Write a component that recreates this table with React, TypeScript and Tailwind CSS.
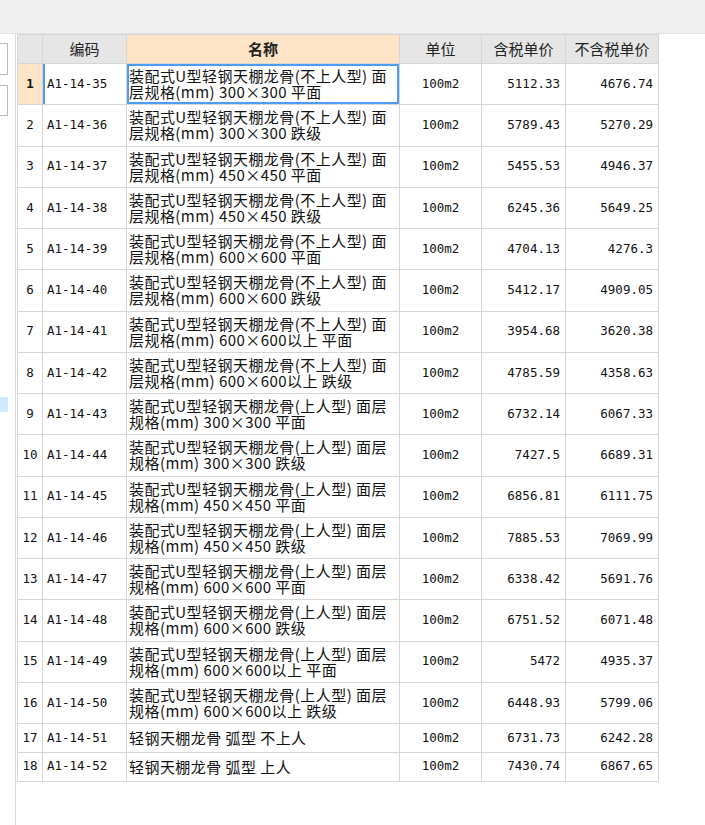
type Row = {
  code: string;
  name: [string, string?];
  unit: string;
  tax: string;
  noTax: string;
};

const spec = (upper: boolean, size: string, kind: string): [string, string] =>
  upper
    ? ["装配式U型轻钢天棚龙骨(上人型) 面层", `规格(mm) ${size} ${kind}`]
    : ["装配式U型轻钢天棚龙骨(不上人型) 面", `层规格(mm) ${size} ${kind}`];

const rows: Row[] = [
  { code: "A1-14-35", name: spec(false, "300×300", "平面"), unit: "100m2", tax: "5112.33", noTax: "4676.74" },
  { code: "A1-14-36", name: spec(false, "300×300", "跌级"), unit: "100m2", tax: "5789.43", noTax: "5270.29" },
  { code: "A1-14-37", name: spec(false, "450×450", "平面"), unit: "100m2", tax: "5455.53", noTax: "4946.37" },
  { code: "A1-14-38", name: spec(false, "450×450", "跌级"), unit: "100m2", tax: "6245.36", noTax: "5649.25" },
  { code: "A1-14-39", name: spec(false, "600×600", "平面"), unit: "100m2", tax: "4704.13", noTax: "4276.3" },
  { code: "A1-14-40", name: spec(false, "600×600", "跌级"), unit: "100m2", tax: "5412.17", noTax: "4909.05" },
  { code: "A1-14-41", name: spec(false, "600×600以上", "平面"), unit: "100m2", tax: "3954.68", noTax: "3620.38" },
  { code: "A1-14-42", name: spec(false, "600×600以上", "跌级"), unit: "100m2", tax: "4785.59", noTax: "4358.63" },
  { code: "A1-14-43", name: spec(true, "300×300", "平面"), unit: "100m2", tax: "6732.14", noTax: "6067.33" },
  { code: "A1-14-44", name: spec(true, "300×300", "跌级"), unit: "100m2", tax: "7427.5", noTax: "6689.31" },
  { code: "A1-14-45", name: spec(true, "450×450", "平面"), unit: "100m2", tax: "6856.81", noTax: "6111.75" },
  { code: "A1-14-46", name: spec(true, "450×450", "跌级"), unit: "100m2", tax: "7885.53", noTax: "7069.99" },
  { code: "A1-14-47", name: spec(true, "600×600", "平面"), unit: "100m2", tax: "6338.42", noTax: "5691.76" },
  { code: "A1-14-48", name: spec(true, "600×600", "跌级"), unit: "100m2", tax: "6751.52", noTax: "6071.48" },
  { code: "A1-14-49", name: spec(true, "600×600以上", "平面"), unit: "100m2", tax: "5472", noTax: "4935.37" },
  { code: "A1-14-50", name: spec(true, "600×600以上", "跌级"), unit: "100m2", tax: "6448.93", noTax: "5799.06" },
  { code: "A1-14-51", name: ["轻钢天棚龙骨 弧型 不上人"], unit: "100m2", tax: "6731.73", noTax: "6242.28" },
  { code: "A1-14-52", name: ["轻钢天棚龙骨 弧型 上人"], unit: "100m2", tax: "7430.74", noTax: "6867.65" },
];

const mono = "font-['DejaVu_Sans_Mono',monospace] text-[12.5px] text-[#111]";
const cjk = "font-['Noto_Sans_CJK_SC',sans-serif]";
const cell = "border border-[#d6d6d6] p-0";

export default function App() {
  return (
    <div className="w-[705px] h-[825px] bg-white overflow-hidden flex flex-col">
      <div className="h-[34px] shrink-0 bg-[#f0f0f0] border-b border-[#e2e2e2]" />
      <div className="flex flex-1 min-h-0">
        {/* left panel, mostly cut off */}
        <div className="w-[16px] shrink-0 border-r border-[#dcdcdc] pt-[9px] flex flex-col">
          <div className="w-[8px] h-[32px] border border-l-0 border-[#b8b8b8] bg-white" />
          <div className="w-[8px] h-[31px] mt-[10px] border border-l-0 border-[#b8b8b8] bg-white" />
          <div className="w-[8px] h-[15px] mt-[281px] bg-[#cde8ff]" />
        </div>
        <div className="ml-[1px]">
          <table className="table-fixed border-collapse w-[641px]">
            <colgroup>
              <col className="w-[25px]" />
              <col className="w-[84px]" />
              <col className="w-[273px]" />
              <col className="w-[82px]" />
              <col className="w-[84px]" />
              <col className="w-[93px]" />
            </colgroup>
            <thead>
              <tr className={`h-[29px] ${cjk} text-[15px] text-[#222]`}>
                <th className={`${cell} bg-[#e6e6e6]`} />
                <th className={`${cell} bg-[#e6e6e6] font-normal`}>编码</th>
                <th className={`${cell} bg-[#fde4c6] font-bold`}>名称</th>
                <th className={`${cell} bg-[#e6e6e6] font-normal`}>单位</th>
                <th className={`${cell} bg-[#e6e6e6] font-normal`}>含税单价</th>
                <th className={`${cell} bg-[#e6e6e6] font-normal`}>不含税单价</th>
              </tr>
            </thead>
            <tbody>
              {rows.map((r, i) => {
                const two = r.name.length > 1;
                const active = i === 0;
                return (
                  <tr key={r.code} className={two ? "h-[41.25px]" : "h-[28.75px]"}>
                    <td className={`${cell} ${mono} text-center ${active ? "bg-[#fde4c6] font-bold" : ""}`}>
                      {i + 1}
                    </td>
                    <td className={`${cell} ${mono} relative pl-[4px]`}>
                      {active && <div className="absolute left-0 top-0 bottom-0 w-[2px] bg-[#4a9cf6]" />}
                      {r.code}
                    </td>
                    <td className={`${cell} relative pl-[2px] ${cjk} text-[15px] tracking-[0.45px] text-[#111] whitespace-nowrap`}>
                      {active && <div className="absolute inset-0 border-2 border-[#4a9cf6]" />}
                      {r.name.map((line) => (
                        <div key={line} className="h-[16px] leading-[16px]">
                          {line}
                        </div>
                      ))}
                    </td>
                    <td className={`${cell} ${mono} text-center`}>{r.unit}</td>
                    <td className={`${cell} ${mono} text-right pr-[5px]`}>{r.tax}</td>
                    <td className={`${cell} ${mono} text-right pr-[5px]`}>{r.noTax}</td>
                  </tr>
                );
              })}
            </tbody>
          </table>
        </div>
      </div>
    </div>
  );
}
